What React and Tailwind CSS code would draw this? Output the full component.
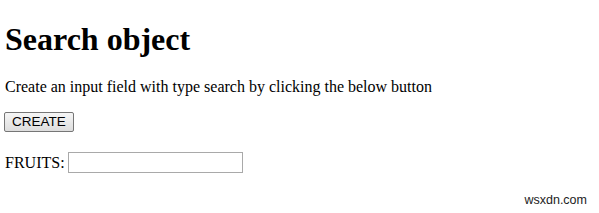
import React from 'react'

export default function App() {
  return (
    <div className="relative w-[599px] h-[213px] bg-white pl-[5px] overflow-hidden" style={{ fontFamily: '"Liberation Serif", serif' }}>
      <h1 className="text-[32px] font-bold leading-[36.8px] pt-[21px] text-black">Search object</h1>
      <p className="text-[16px] leading-[18.4px] mt-[20px] text-black">
        Create an input field with type search by clicking the below button
      </p>
      <button
        className="mt-[16px] -ml-[1px] h-[20px] px-[7px] text-[13.5px] leading-[16px] text-black border border-[#767676] rounded-[2px] bg-gradient-to-b from-[#f6f6f6] to-[#dddddd]"
        style={{ fontFamily: '"Liberation Sans", Arial, sans-serif' }}
      >
        CREATE
      </button>
      <div className="mt-[19px] flex items-center text-[16px] leading-[18.4px] text-black">
        <span>FRUITS:</span>
        <input
          type="search"
          className="ml-[3px] w-[175px] h-[21px] border border-[#a9a9a9] bg-white outline-none"
        />
      </div>
      <div
        className="absolute right-[12px] bottom-[3px] text-[12.5px] text-[#222]"
        style={{ fontFamily: '"Liberation Sans", Arial, sans-serif' }}
      >
        wsxdn.com
      </div>
    </div>
  )
}
